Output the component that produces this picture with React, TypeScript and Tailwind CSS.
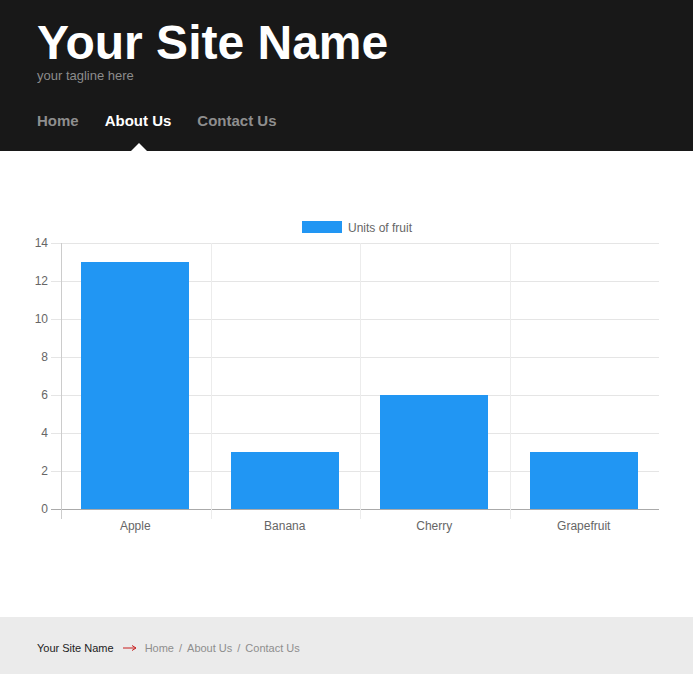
const FONT = { fontFamily: '"Liberation Sans", Arial, Helvetica, sans-serif' };

const DATA = [
  { label: 'Apple', value: 13 },
  { label: 'Banana', value: 3 },
  { label: 'Cherry', value: 6 },
  { label: 'Grapefruit', value: 3 },
];

// chart geometry in svg coords (svg top = page y 151)
const TOP = 92;
const BOTTOM = 358;
const LEFT = 61;
const RIGHT = 659;
const MAX = 14;

const BarChart = () => {
  const yFor = (v: number) => BOTTOM - ((BOTTOM - TOP) * v) / MAX;
  const colW = (RIGHT - LEFT) / DATA.length;
  const barW = 108;
  const ticks = [0, 2, 4, 6, 8, 10, 12, 14];

  return (
    <svg width="693" height="466" viewBox="0 0 693 466" className="block" style={FONT}>
      {/* legend */}
      <rect x="302" y="70" width="40" height="12" fill="#2196f3" />
      <text x="348" y="81" fontSize="12" fill="#666">Units of fruit</text>

      {/* horizontal grid + y labels */}
      {ticks.map((t) => (
        <g key={t}>
          <line x1={51} x2={RIGHT} y1={yFor(t) + 0.5} y2={yFor(t) + 0.5} stroke={t === 0 ? '#aaa' : '#e5e5e5'} strokeWidth="1" />
          <text x="48" y={yFor(t) + 4} fontSize="12" fill="#666" textAnchor="end">{t}</text>
        </g>
      ))}

      {/* vertical grid */}
      {DATA.map((_, i) => {
        const x = Math.round(LEFT + colW * i) + 0.5;
        return (
          <line key={i} x1={x} x2={x} y1={TOP} y2={BOTTOM + 10} stroke={i === 0 ? '#ccc' : '#ececec'} strokeWidth="1" />
        );
      })}

      {/* bars */}
      {DATA.map((d, i) => {
        const cx = LEFT + colW * i + colW / 2;
        const y = yFor(d.value);
        return (
          <g key={d.label}>
            <rect x={Math.floor(cx - barW / 2)} y={y} width={barW} height={BOTTOM - y} fill="#2196f3" />
            <text x={cx - 0.5} y={BOTTOM + 21} fontSize="12" fill="#666" textAnchor="middle">{d.label}</text>
          </g>
        );
      })}
    </svg>
  );
};

const RedArrow = () => (
  <svg width="14" height="8" viewBox="0 0 14 8" className="block">
    <line x1="0" y1="4" x2="12.5" y2="4" stroke="#c81e1e" strokeWidth="1" />
    <polyline points="9,1.5 13,4 9,6.5" fill="none" stroke="#c81e1e" strokeWidth="1" />
  </svg>
);

export default function App() {
  return (
    <div className="w-[693px] min-h-[674px] flex flex-col bg-white" style={FONT}>
      <header className="bg-[#181818] h-[151px] px-[37px] pt-[18px] relative">
        <h1 className="text-[48px] leading-[50px] font-bold text-white">Your Site Name</h1>
        <p className="text-[13px] leading-[15px] text-[#8c8c8c]">your tagline here</p>
        <nav className="flex gap-[26px] mt-[29px] text-[15px] font-bold leading-[18px]">
          <a className="text-[#8e8e8e]">Home</a>
          <a className="text-white">About Us</a>
          <a className="text-[#8e8e8e]">Contact Us</a>
        </nav>
        <span className="absolute left-[131px] bottom-0 w-0 h-0 border-l-[8px] border-r-[8px] border-b-[8px] border-l-transparent border-r-transparent border-b-white" />
      </header>

      <main className="h-[466px]">
        <BarChart />
      </main>

      <footer className="bg-[#ebebeb] h-[57px] px-[37px] pt-[5px] flex items-center text-[11px]">
        <span className="text-[#222]">Your Site Name</span>
        <span className="ml-[9px]"><RedArrow /></span>
        <span className="text-[#8e8e8e] flex gap-[5px] ml-[8px]">
          <span>Home</span><span>/</span><span>About Us</span><span>/</span><span>Contact Us</span>
        </span>
      </footer>
    </div>
  );
}
